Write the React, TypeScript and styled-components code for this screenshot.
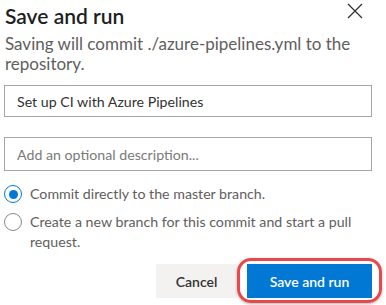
import * as React from "react";
import styled, { createGlobalStyle } from "styled-components";

const GlobalStyle = createGlobalStyle`
  html, body {
    margin: 0;
    padding: 0;
    background: #ffffff;
  }
  body {
    font-family: Lato, "Open Sans", sans-serif;
    color: #323130;
  }
`;

const Dialog = styled.div`
  width: 386px;
  height: 305px;
  box-sizing: border-box;
  padding: 0 14px 0 4px;
  display: flex;
  flex-direction: column;
  overflow: hidden;
`;

const TitleRow = styled.div`
  display: flex;
  justify-content: space-between;
  align-items: flex-start;
  padding-left: 1px;
`;

const Title = styled.h1`
  margin: 0;
  font-size: 21px;
  font-weight: 600;
  line-height: 32px;
  color: #201f1e;
`;

const CloseButton = styled.button`
  border: none;
  background: none;
  padding: 0;
  margin: 2px 8px 0 0;
  width: 18px;
  height: 18px;
  display: flex;
  align-items: center;
  justify-content: center;
  cursor: pointer;
`;

const Subtitle = styled.p`
  margin: 2px 0 0 1px;
  font-size: 17px;
  line-height: 20px;
  color: #605e5c;
`;

const TextField = styled.input<{ $tall?: boolean }>`
  box-sizing: border-box;
  width: 368px;
  height: ${(p) => (p.$tall ? 34 : 32)}px;
  border: 1px solid #a6a6a6;
  padding: 0 12px;
  font-family: inherit;
  font-size: 14.2px;
  color: #323130;
  outline: none;
  &::placeholder {
    color: #7a7a7a;
  }
`;

const Fields = styled.div`
  display: flex;
  flex-direction: column;
  gap: 20px;
  margin-top: 11px;
`;

const Options = styled.div`
  display: flex;
  flex-direction: column;
  gap: 8px;
  margin-top: 13px;
`;

const Option = styled.label`
  display: flex;
  align-items: flex-start;
  gap: 8px;
  font-size: 14.2px;
  line-height: 20px;
  color: #605e5c;
  cursor: pointer;
`;

const Radio = styled.span<{ $checked?: boolean }>`
  flex: none;
  box-sizing: border-box;
  width: 18px;
  height: 18px;
  margin-top: 1px;
  border-radius: 50%;
  border: 1px solid ${(p) => (p.$checked ? "#0078d4" : "#8a8886")};
  display: flex;
  align-items: center;
  justify-content: center;
  &::after {
    content: "";
    width: 9px;
    height: 9px;
    border-radius: 50%;
    background: ${(p) => (p.$checked ? "#0078d4" : "transparent")};
  }
`;

const Footer = styled.div`
  display: flex;
  justify-content: flex-end;
  align-items: center;
  gap: 10px;
  margin-top: 12px;
`;

const Button = styled.button<{ $primary?: boolean }>`
  box-sizing: border-box;
  height: 34px;
  border: none;
  padding: 0;
  width: ${(p) => (p.$primary ? 125 : 81)}px;
  font-family: inherit;
  font-size: 14px;
  font-weight: 600;
  background: ${(p) => (p.$primary ? "#0078d4" : "#f3f2f1")};
  color: ${(p) => (p.$primary ? "#ffffff" : "#323130")};
  cursor: pointer;
`;

const Highlight = styled.div`
  position: relative;
  &::before {
    content: "";
    position: absolute;
    left: -10px;
    right: -10px;
    top: -6px;
    bottom: -5px;
    border: 3px solid #e8474c;
    border-radius: 14px;
    box-shadow: 0 1px 3px rgba(0, 0, 0, 0.3);
    pointer-events: none;
  }
`;

const App: React.FC = () => {
  return (
    <>
      <GlobalStyle />
      <Dialog>
        <TitleRow>
          <Title>Save and run</Title>
          <CloseButton aria-label="Close">
            <svg width="16" height="16" viewBox="0 0 16 16">
              <path d="M1 1 L15 15 M15 1 L1 15" stroke="#323130" strokeWidth="1.3" />
            </svg>
          </CloseButton>
        </TitleRow>
        <Subtitle>Saving will commit ./azure-pipelines.yml to the repository.</Subtitle>
        <Fields>
          <TextField defaultValue="Set up CI with Azure Pipelines" />
          <TextField $tall placeholder="Add an optional description..." />
        </Fields>
        <Options>
          <Option>
            <Radio $checked />
            Commit directly to the master branch.
          </Option>
          <Option>
            <Radio />
            Create a new branch for this commit and start a pull request.
          </Option>
        </Options>
        <Footer>
          <Button>Cancel</Button>
          <Highlight>
            <Button $primary>Save and run</Button>
          </Highlight>
        </Footer>
      </Dialog>
    </>
  );
};

export default App;
